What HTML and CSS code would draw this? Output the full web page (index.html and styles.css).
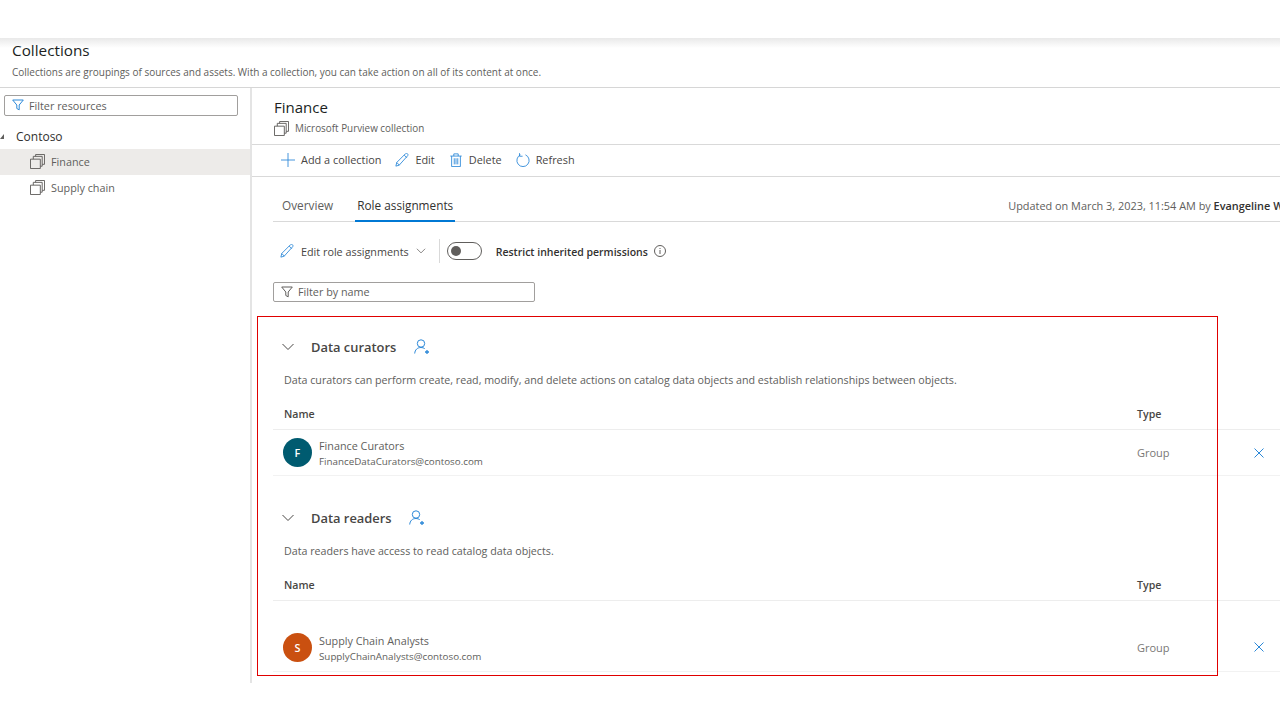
FILE: index.html
```html
<!DOCTYPE html>
<html lang="en">
<head>
<meta charset="utf-8">
<title>Collections</title>
<link rel="stylesheet" href="styles.css">
</head>
<body>
<svg class="defs" width="0" height="0" aria-hidden="true">
  <symbol id="stack" viewBox="0 0 16 16"><path d="M.5 5.500h10.500v10H.5zM3.500 5.500v-3h9.500v10.500h-2M6 2.500V.5h9.500v10.500H13" fill="none" stroke="currentColor"/></symbol>
  <symbol id="funnel" viewBox="0 0 12 12"><path d="M.7 1h10.600L7.200 6v4.800L4.800 9.500V6z" fill="none" stroke="currentColor"/></symbol>
  <symbol id="pencil" viewBox="0 0 16 16"><path d="M1 15l1-4.200L11.800 1c.8-.8 1.800-.8 2.500-.1s.7 1.700 0 2.400L4.800 13.900zM2 10.800L5 14M10.500 2.400l3 3" fill="none" stroke="currentColor"/></symbol>
  <symbol id="person" viewBox="0 0 16 16"><circle cx="7" cy="4.500" r="3.700" fill="none" stroke="currentColor"/><path d="M.7 14.500c.3-3.800 2.700-6 6.300-6 1.500 0 2.700.4 3.700 1.100" fill="none" stroke="currentColor"/><path d="M11 13h4M13 11v4" stroke="currentColor" stroke-width="1.300"/></symbol>
  <symbol id="chev" viewBox="0 0 12 8"><path d="M.5 1l5.500 5.500L11.500 1" fill="none" stroke="currentColor"/></symbol>
  <symbol id="close" viewBox="0 0 10 10"><path d="M.5.5l9 9M9.500.5l-9 9" fill="none" stroke="currentColor"/></symbol>
</svg>

<header class="page-head">
  <h1>Collections</h1>
  <p>Collections are groupings of sources and assets. With a collection, you can take action on all of its content at once.</p>
</header>

<div class="layout">
  <aside class="side">
    <div class="filter side-filter"><svg class="ico-filter blue"><use href="#funnel"/></svg><span>Filter resources</span></div>
    <div class="root"><i class="caret"></i>Contoso</div>
    <div class="node selected"><svg class="ico-stack"><use href="#stack"/></svg>Finance</div>
    <div class="node"><svg class="ico-stack"><use href="#stack"/></svg>Supply chain</div>
  </aside>

  <main class="main">
    <section class="title">
      <h2>Finance</h2>
      <div class="kind"><svg class="ico-stack"><use href="#stack"/></svg>Microsoft Purview collection</div>
    </section>

    <nav class="toolbar">
      <span class="tool"><svg class="ico-tool blue" viewBox="0 0 16 16"><path d="M8 0v16M0 8h16" stroke="currentColor" fill="none"/></svg>Add a collection</span>
      <span class="tool"><svg class="ico-tool blue"><use href="#pencil"/></svg>Edit</span>
      <span class="tool"><svg class="ico-tool blue" viewBox="0 0 16 16"><path d="M3 3.500V15.500h10V3.500M1.500 3.500h13M5.500 3.500V1h5v2.500M6 6v7M8 6v7M10 6v7" fill="none" stroke="currentColor"/></svg>Delete</span>
      <span class="tool"><svg class="ico-tool blue" viewBox="0 0 16 16"><path d="M5.200 2.100a7 7 0 1 0 5.600 0" fill="none" stroke="currentColor"/><path d="M4 .2v3.500h3.500" fill="none" stroke="currentColor"/></svg>Refresh</span>
    </nav>

    <div class="tabs">
      <span class="tab">Overview</span>
      <span class="tab active">Role assignments</span>
      <span class="updated">Updated on March 3, 2023, 11:54 AM by <b>Evangeline W</b></span>
    </div>

    <div class="actions">
      <span class="edit-roles"><svg class="ico-tool blue"><use href="#pencil"/></svg>Edit role assignments<svg class="ico-chev-small"><use href="#chev"/></svg></span>
      <span class="divider"></span>
      <span class="toggle"><i></i></span>
      <b class="restrict">Restrict inherited permissions</b>
      <svg class="ico-info" viewBox="0 0 12 12"><circle cx="6" cy="6" r="5.500" fill="none" stroke="currentColor"/><path d="M6 5v4M6 3v1" stroke="currentColor"/></svg>
    </div>

    <div class="filter name-filter"><svg class="ico-filter"><use href="#funnel"/></svg><span>Filter by name</span></div>

    <section class="group curators">
      <div class="group-head"><svg class="ico-chev"><use href="#chev"/></svg><h3>Data curators</h3><svg class="ico-person"><use href="#person"/></svg></div>
      <p class="desc">Data curators can perform create, read, modify, and delete actions on catalog data objects and establish relationships between objects.</p>
      <div class="cols"><span>Name</span><span>Type</span></div>
      <div class="row">
        <span class="avatar teal">F</span>
        <div class="who"><div class="who-name">Finance Curators</div><div class="who-mail">FinanceDataCurators@contoso.com</div></div>
        <span class="type">Group</span>
        <svg class="ico-close"><use href="#close"/></svg>
      </div>
    </section>

    <section class="group readers">
      <div class="group-head"><svg class="ico-chev"><use href="#chev"/></svg><h3>Data readers</h3><svg class="ico-person"><use href="#person"/></svg></div>
      <p class="desc">Data readers have access to read catalog data objects.</p>
      <div class="cols"><span>Name</span><span>Type</span></div>
      <div class="row tall">
        <span class="avatar orange">S</span>
        <div class="who"><div class="who-name">Supply Chain Analysts</div><div class="who-mail">SupplyChainAnalysts@contoso.com</div></div>
        <span class="type">Group</span>
        <svg class="ico-close"><use href="#close"/></svg>
      </div>
    </section>
  </main>
</div>

<div class="highlight"></div>
</body>
</html>
```
FILE: styles.css
```css
* { box-sizing: border-box; }
html, body { margin: 0; height: 720px; overflow: hidden; }
body {
  background: #fff;
  color: #323130;
  font-family: "Open Sans", "Noto Sans", sans-serif;
  font-size: 10.800px;
  padding-top: 38px;
  position: relative;
}
h1, h2, h3, p { margin: 0; font-weight: 400; }
svg { flex: none; display: block; }
.defs { position: absolute; }
.blue { color: #2b88d8; }

.page-head {
  height: 50px;
  padding: 2px 12px 0;
  border-bottom: 1px solid #d6d6d6;
  background: linear-gradient(#e9e9e9, #fff 10px);
}
.page-head h1 { font-size: 15.300px; line-height: 20px; color: #201f1e; }
.page-head p { font-size: 10px; line-height: 14px; margin-top: 5px; color: #605e5c; }

.layout { display: flex; height: 595px; }

.side { width: 252px; flex: none; border-right: 2px solid #e4e4e4; padding-top: 7px; }
.filter {
  display: flex;
  align-items: center;
  height: 21px;
  border: 1px solid #a19f9d;
  border-radius: 2px;
  color: #605e5c;
  padding: 0 0 1px 7px;
}
.side-filter { width: 234px; margin-left: 4px; gap: 5px; }
.name-filter { width: 262px; margin-left: 21px; height: 20px; gap: 5px; color: #605e5c; }
.ico-filter { width: 12px; height: 12px; color: #605e5c; }
.ico-filter.blue { color: #2b88d8; }

.root { height: 33px; padding: 12px 0 0 16px; font-size: 12px; line-height: 18px; position: relative; color: #323130; }
.caret {
  position: absolute;
  left: 0; top: 18px;
  border-style: solid;
  border-width: 0 0 5px 4px;
  border-color: transparent transparent #605e5c transparent;
}
.node { height: 26px; display: flex; align-items: center; gap: 6px; padding: 0 0 1px 30px; color: #605e5c; }
.node.selected { background: #edebe9; }
.ico-stack { width: 15px; height: 15px; color: #605e5c; }

.main { flex: 1; min-width: 0; overflow: hidden; }

.title { height: 57px; padding: 9px 0 0 22px; border-bottom: 1px solid #d9d9d9; }
.title h2 { font-size: 15px; line-height: 20px; color: #201f1e; }
.kind { display: flex; align-items: center; gap: 6px; margin-top: 3px; color: #605e5c; font-size: 9.900px; line-height: 16px; }

.toolbar { height: 32px; display: flex; align-items: center; gap: 14px; padding: 0 0 2px 29px; border-bottom: 1px solid #d9d9d9; color: #484644; font-size: 10.900px; }
.tool { display: flex; align-items: center; gap: 6px; }
.ico-tool { width: 14px; height: 14px; }

.tabs { height: 45px; margin-left: 21px; display: flex; align-items: flex-end; border-bottom: 1px solid #d9d9d9; }
.tab { height: 31px; padding: 5px 2px 0; margin: 0 0 -1px 7px; line-height: 18px; font-size: 11.800px; color: #605e5c; white-space: nowrap; }
.tab.active { color: #323130; font-weight: 500; border-bottom: 2px solid #0078d4; margin-left: 20px; }
.updated { margin-left: 553px; padding-bottom: 7px; line-height: 16px; font-size: 10.900px; color: #605e5c; white-space: nowrap; }
.updated b { color: #323130; font-weight: 600; }

.actions { height: 60px; display: flex; align-items: center; padding: 0 0 2px 28px; color: #484644; }
.edit-roles { display: flex; align-items: center; gap: 7px; }
.ico-chev-small { width: 10px; height: 6px; color: #605e5c; }
.divider { width: 1px; height: 24px; background: #d9d9d9; margin: 0 7px 0 13px; }
.toggle { width: 35px; height: 18px; border: 1px solid #605e5c; border-radius: 9px; padding: 3px; }
.toggle i { display: block; width: 10px; height: 10px; border-radius: 50%; background: #605e5c; }
.restrict { margin-left: 14px; padding-top: 2px; font-size: 10.500px; font-weight: 600; color: #323130; }
.ico-info { width: 12px; height: 12px; margin-left: 6px; color: #605e5c; }

.group { margin-left: 21px; }
.curators { margin-top: 33px; }
.readers { margin-top: 30px; }
.group-head { height: 24px; display: flex; align-items: center; padding-left: 9px; }
.ico-chev { width: 12px; height: 8px; color: #484644; }
.group-head h3 { font-size: 12.900px; font-weight: 600; color: #484644; margin-left: 17px; }
.ico-person { width: 16px; height: 16px; color: #2b88d8; margin-left: 17px; }
.curators .ico-person { margin-left: 18px; }
.desc { margin: 13px 0 0 11px; font-size: 10.700px; line-height: 16px; color: #605e5c; }
.cols { height: 32px; margin-top: 10px; padding: 0 0 0 11px; display: grid; grid-template-columns: 853px auto; align-items: center; font-size: 10.600px; font-weight: 600; color: #484644; border-bottom: 1px solid #ededed; }
.row { height: 46px; display: grid; grid-template-columns: 29px 825px 117px 12px; align-items: center; padding-left: 10px; border-bottom: 1px solid #f2f2f2; }
.row.tall { height: 71px; padding-top: 22px; }
.avatar { width: 29px; height: 29px; border-radius: 50%; color: #fff; font-weight: 600; display: flex; align-items: center; justify-content: center; }
.teal { background: #005b70; }
.orange { background: #ca5010; }
.who { padding: 2px 0 0 7px; }
.who-name { line-height: 15px; color: #605e5c; }
.who-mail { font-size: 9.800px; line-height: 15px; margin-top: 1px; color: #605e5c; }
.type { color: #797775; font-size: 11px; }
.ico-close { width: 10px; height: 10px; color: #2b88d8; }

.highlight { position: absolute; left: 257px; top: 316px; width: 961px; height: 360px; border: 1px solid #e00000; pointer-events: none; }
```
